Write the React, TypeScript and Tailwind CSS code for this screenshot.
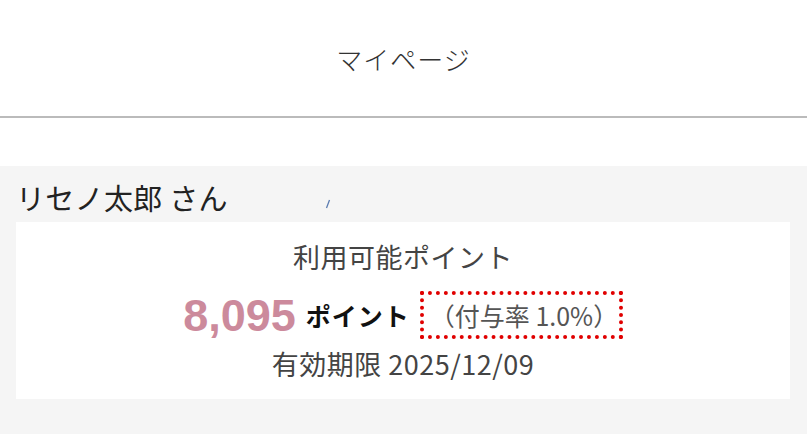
import React from "react";

export default function App() {
  const jp = { fontFamily: '"Noto Sans CJK JP", "Noto Sans", sans-serif' };
  return (
    <div className="w-[807px] h-[434px] bg-white overflow-hidden text-[#333]" style={jp}>
      <header className="h-[118px] flex items-center justify-center border-b-2 border-[#bbb]">
        <h1 className="text-[26px] leading-none mt-[2px] tracking-[1px] font-light text-[#333]">マイページ</h1>
      </header>
      <section className="mt-[48px] bg-[#f5f5f5] px-4 pb-[40px] h-[268px]">
        <div className="relative h-[56px] flex items-center">
          <span className="text-[29px] leading-none text-[#222] mt-[6px] tracking-[0.3px]">リセノ太郎 さん</span>
          <svg className="absolute left-[309px] top-[33px]" width="6" height="10" viewBox="0 0 6 10">
            <line x1="4.5" y1="1" x2="1.5" y2="9" stroke="#5a7bb0" strokeWidth="1.3" />
          </svg>
        </div>
        <div className="bg-white mr-[1px] h-[177px] flex flex-col items-center pt-[21px]">
          <div className="text-[27px] leading-none text-[#444] tracking-[0.5px]">利用可能ポイント</div>
          <div className="flex items-center mt-[21px]">
            <span className="text-[45px] leading-none font-bold text-[#cc8a9c]" style={{ fontFamily: '"Liberation Sans", Arial, sans-serif' }}>8,095</span>
            <span className="text-[25px] leading-none font-bold text-[#111] ml-[10px] tracking-[1px]">ポイント</span>
            <span className="ml-[10px] border-4 border-dotted border-[#e00000] px-[6px] h-[48px] w-[203px] flex items-center justify-center text-[25px] leading-none text-[#555]">（付与率 1.0%）</span>
          </div>
          <div className="text-[27px] leading-none text-[#444] mt-[11px] tracking-[0.5px]">有効期限 2025/12/09</div>
        </div>
      </section>
    </div>
  );
}
